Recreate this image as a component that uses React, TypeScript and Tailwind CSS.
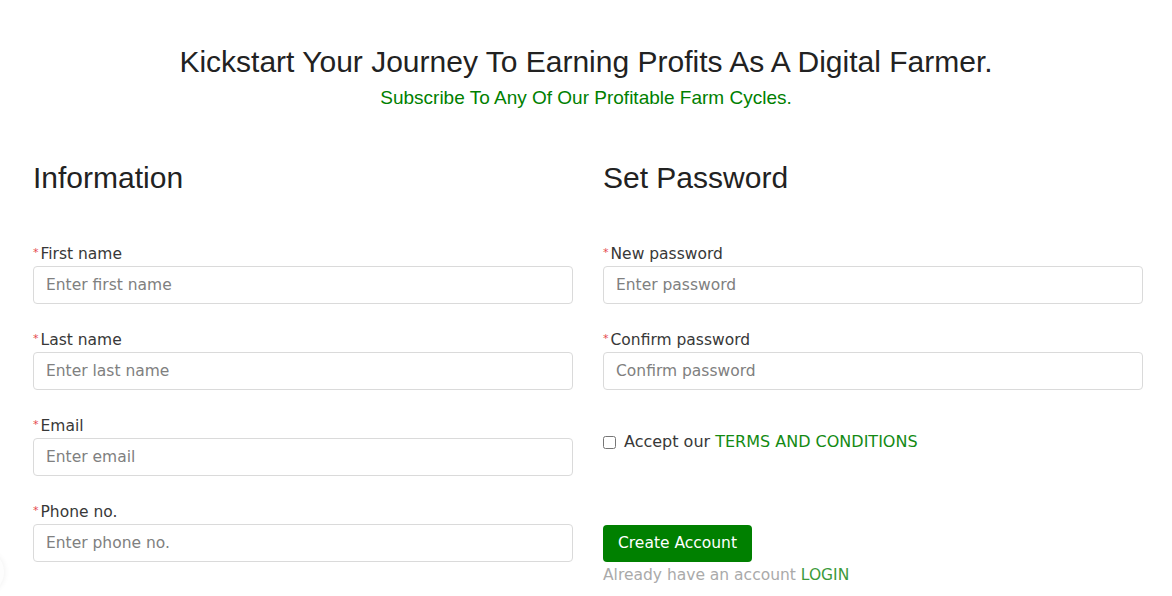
import React from 'react';

const fieldFont = { fontFamily: '"DejaVu Sans", "Open Sans", sans-serif' };
const headFont = { fontFamily: '"Liberation Sans", Arial, sans-serif' };

type FieldProps = { label: string; placeholder: string; type?: string; last?: boolean };

const Field: React.FC<FieldProps> = ({ label, placeholder, type = 'text', last }) => (
  <div className={last ? '' : 'mb-6'}>
    <label className="flex items-start h-6 leading-6 text-[15.5px] text-[#383838]">
      <span className="text-[#e5484d] text-[11px] leading-4 mt-[3px] mr-[2px]">*</span>
      {label}
    </label>
    <input
      type={type}
      placeholder={placeholder}
      className="block w-full h-[38px] px-3 text-[15.5px] text-[#333] border border-[#dadada] rounded-[4px] outline-none placeholder:text-[#808080]"
      style={fieldFont}
    />
  </div>
);

export default function App() {
  return (
    <div className="relative min-h-screen bg-white overflow-hidden" style={headFont}>
      {/* Header */}
      <div className="pt-[44px] text-center">
        <h1 className="text-[30px] leading-[36px] text-[#222]">
          Kickstart Your Journey To Earning Profits As A Digital Farmer.
        </h1>
        <p className="mt-[6px] text-[19px] leading-6 text-[#008000]">
          Subscribe To Any Of Our Profitable Farm Cycles.
        </p>
      </div>

      <div className="flex gap-[30px] pl-[33px] pr-[29px] mt-[50px]" style={fieldFont}>
        {/* Information */}
        <div className="flex-1">
          <h2 className="text-[30px] leading-[36px] text-[#222] mb-[46px]" style={headFont}>
            Information
          </h2>
          <Field label="First name" placeholder="Enter first name" />
          <Field label="Last name" placeholder="Enter last name" />
          <Field label="Email" placeholder="Enter email" type="email" />
          <Field label="Phone no." placeholder="Enter phone no." last />
        </div>

        {/* Set Password */}
        <div className="flex-1">
          <h2 className="text-[30px] leading-[36px] text-[#222] mb-[46px]" style={headFont}>
            Set Password
          </h2>
          <Field label="New password" placeholder="Enter password" type="password" />
          <Field label="Confirm password" placeholder="Confirm password" type="password" last />

          <label className="mt-[40px] flex items-center h-6 text-[16px] text-[#383838]">
            <input type="checkbox" className="w-[13px] h-[13px] mr-[8px]" />
            Accept our&nbsp;<span className="text-[#138a13]">TERMS AND CONDITIONS</span>
          </label>

          <button className="mt-[71px] h-[37px] px-[15px] rounded-[4px] bg-[#008000] text-white text-[15.5px]">
            Create Account
          </button>
          <p className="mt-[3px] text-[15.5px] leading-5 text-[#aaa]">
            Already have an account <span className="text-[#3c9a3c]">LOGIN</span>
          </p>
        </div>
      </div>

      {/* faint edge of a floating widget */}
      <div className="absolute left-[-34px] top-[552px] w-[38px] h-[40px] rounded-full bg-[#fdfdfd] shadow-[0_0_6px_rgba(0,0,0,0.07)]" />
    </div>
  );
}
